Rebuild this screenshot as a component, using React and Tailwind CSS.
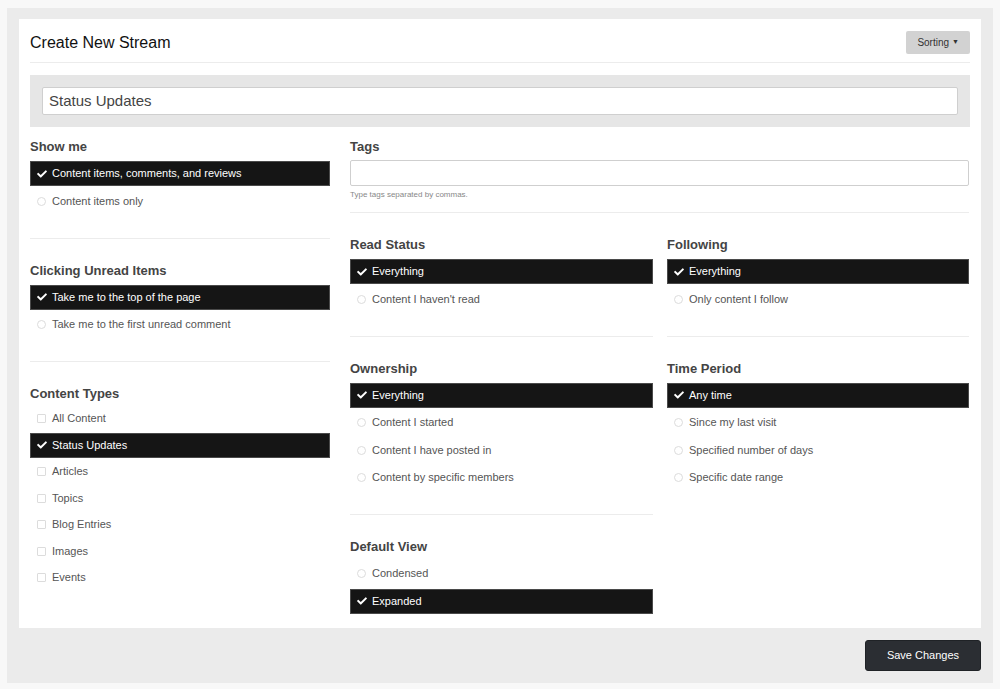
import React from 'react';
import { FaCheck } from 'react-icons/fa';

const font = { fontFamily: '"Liberation Sans", Arial, Helvetica, sans-serif' };

// one option row: selected rows are black bars, others get a radio or checkbox marker
function Option({ label, selected, kind = 'radio' }) {
  if (selected) {
    return (
      <div className="h-[25px] flex items-center bg-[#151515] border border-[#4a4a4a] pl-[6px] text-[11px] text-white">
        <FaCheck className="w-[10px] h-[10px] mr-[5px]" />
        {label}
      </div>
    );
  }
  return (
    <div className="h-[25px] flex items-center pl-[7px] text-[11px] text-[#555]">
      <span
        className={
          kind === 'radio'
            ? 'w-[9px] h-[9px] rounded-full border border-[#dcdcdc] mr-[6px]'
            : 'w-[9px] h-[9px] rounded-[1px] border border-[#dcdcdc] mr-[6px]'
        }
      />
      {label}
    </div>
  );
}

function Section({ title, options, kind, divider = true, first = false, gap = 'gap-[2.5px]', headGap = 'mb-[6px]' }) {
  return (
    <div className={(first ? '' : 'pt-[24px] ') + (divider ? 'pb-[24px] border-b border-[#ececec]' : '')}>
      <h3 className={'h-[16px] leading-[16px] text-[13px] font-bold text-[#444] ' + headGap}>{title}</h3>
      <div className={'flex flex-col ' + gap}>
        {options.map((o) => (
          <Option key={o.label} label={o.label} selected={o.selected} kind={kind} />
        ))}
      </div>
    </div>
  );
}

export default function App() {
  return (
    <div className="min-h-screen bg-[#f8f8f8] pt-[8px] pl-[7px]" style={font}>
      <div className="w-[986px] bg-[#ebebeb] pt-[11px] px-[12px] pb-[12px]">
        {/* main panel */}
        <div className="bg-white px-[11px] pb-[14px]">
          {/* header */}
          <div className="pt-[12px] pb-[8px] border-b border-[#ececec] flex items-center justify-between">
            <h1 className="text-[16px] text-[#111] leading-[23px]">Create New Stream</h1>
            <button className="h-[23px] px-[11px] bg-[#d2d2d2] rounded-[2px] text-[10px] text-[#333] flex items-center gap-[3px]">
              Sorting
              <span className="text-[7px]">▼</span>
            </button>
          </div>

          {/* stream title */}
          <div className="mt-[12px] bg-[#e6e6e6] p-[12px]">
            <div className="h-[28px] bg-white border border-[#cfcfcf] rounded-[2px] flex items-center pl-[6px] text-[15px] text-[#444]">
              Status Updates
            </div>
          </div>

          <div className="mt-[12px] flex">
            {/* left column */}
            <div className="w-[300px]">
              <Section
                first
                title="Show me"
                options={[
                  { label: 'Content items, comments, and reviews', selected: true },
                  { label: 'Content items only' },
                ]}
              />
              <Section
                title="Clicking Unread Items"
                options={[
                  { label: 'Take me to the top of the page', selected: true },
                  { label: 'Take me to the first unread comment' },
                ]}
              />
              <Section
                title="Content Types"
                kind="checkbox"
                divider={false}
                gap="gap-[1.5px]"
                headGap="mb-[4px]"
                options={[
                  { label: 'All Content' },
                  { label: 'Status Updates', selected: true },
                  { label: 'Articles' },
                  { label: 'Topics' },
                  { label: 'Blog Entries' },
                  { label: 'Images' },
                  { label: 'Events' },
                ]}
              />
            </div>

            {/* right area */}
            <div className="ml-[20px] w-[619px]">
              <div className="pb-[12px] border-b border-[#ececec]">
                <h3 className="h-[16px] leading-[16px] text-[13px] font-bold text-[#444] mb-[5px]">Tags</h3>
                <div className="h-[26px] bg-white border border-[#cfcfcf] rounded-[2px]" />
                <p className="mt-[3px] text-[8px] leading-[11px] text-[#888]">Type tags separated by commas.</p>
              </div>

              <div className="flex gap-[14px]">
                <div className="w-[303px]">
                  <Section
                    title="Read Status"
                    options={[{ label: 'Everything', selected: true }, { label: "Content I haven't read" }]}
                  />
                  <Section
                    title="Ownership"
                    options={[
                      { label: 'Everything', selected: true },
                      { label: 'Content I started' },
                      { label: 'Content I have posted in' },
                      { label: 'Content by specific members' },
                    ]}
                  />
                  <Section
                    title="Default View"
                    divider={false}
                    options={[{ label: 'Condensed' }, { label: 'Expanded', selected: true }]}
                  />
                </div>
                <div className="w-[302px]">
                  <Section
                    title="Following"
                    options={[{ label: 'Everything', selected: true }, { label: 'Only content I follow' }]}
                  />
                  <Section
                    title="Time Period"
                    divider={false}
                    options={[
                      { label: 'Any time', selected: true },
                      { label: 'Since my last visit' },
                      { label: 'Specified number of days' },
                      { label: 'Specific date range' },
                    ]}
                  />
                </div>
              </div>
            </div>
          </div>
        </div>

        {/* footer */}
        <div className="mt-[12px] flex justify-end">
          <button className="w-[116px] h-[31px] bg-[#2b2e33] border border-[#1f2226] rounded-[3px] text-[11px] text-white">
            Save Changes
          </button>
        </div>
      </div>
    </div>
  );
}
